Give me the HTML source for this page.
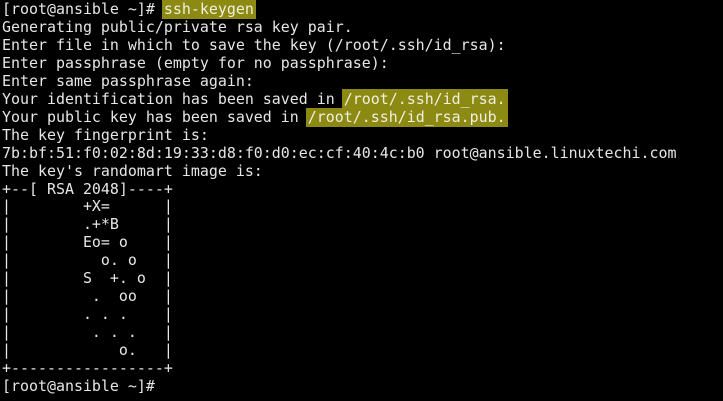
<!DOCTYPE html>
<html><head><style>
html,body{margin:0;padding:0;background:#000;width:723px;height:401px;overflow:hidden}
pre{margin:0;position:absolute;left:2px;top:1px;font-family:"DejaVu Sans Mono","Liberation Mono",monospace;font-size:14.95px;line-height:17.95px;color:#e6e6e6;white-space:pre}
.h{background:#8c8a12;color:#f0f0e0;padding:1px 2px 1px;margin:0 -2px}
.h2{background:#8c8a12;color:#f0f0e0;padding:0 2px 1px;margin:0 -2px}
</style></head><body>
<pre>[root@ansible ~]# <span class="h">ssh-keygen</span>
Generating public/private rsa key pair.
Enter file in which to save the key (/root/.ssh/id_rsa):
Enter passphrase (empty for no passphrase):
Enter same passphrase again:
Your identification has been saved in <span class="h">/root/.ssh/id_rsa.</span>
Your public key has been saved in <span class="h2">/root/.ssh/id_rsa.pub.</span>
The key fingerprint is:
7b:bf:51:f0:02:8d:19:33:d8:f0:d0:ec:cf:40:4c:b0 root@ansible.linuxtechi.com
The key's randomart image is:
+--[ RSA 2048]----+
|        +X=      |
|        .+*B     |
|        Eo= o    |
|          o. o   |
|        S  +. o  |
|         .  oo   |
|        . . .    |
|         . . .   |
|            o.   |
+-----------------+
[root@ansible ~]#</pre>
</body></html>
